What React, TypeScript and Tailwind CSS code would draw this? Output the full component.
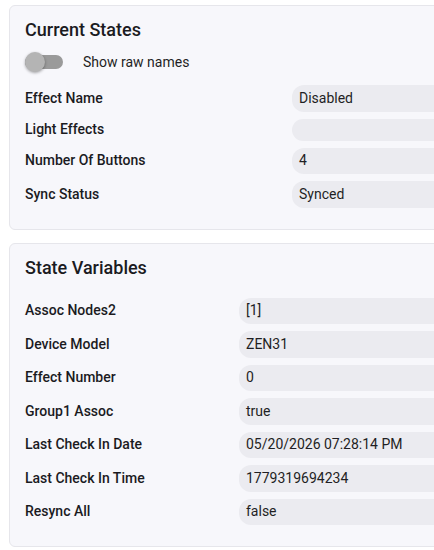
import React from "react";

type Row = { label: string; value: string };

const currentStates: Row[] = [
  { label: "Effect Name", value: "Disabled" },
  { label: "Light Effects", value: "" },
  { label: "Number Of Buttons", value: "4" },
  { label: "Sync Status", value: "Synced" },
];

const stateVariables: Row[] = [
  { label: "Assoc Nodes2", value: "[1]" },
  { label: "Device Model", value: "ZEN31" },
  { label: "Effect Number", value: "0" },
  { label: "Group1 Assoc", value: "true" },
  { label: "Last Check In Date", value: "05/20/2026 07:28:14 PM" },
  { label: "Last Check In Time", value: "1779319694234" },
  { label: "Resync All", value: "false" },
];

function ValuePill({ value }: { value: string }) {
  return (
    <div
      className={`flex flex-1 items-center rounded-xl bg-[#ebebf0] pl-[7px] text-[14px] text-[#1f1f24] ${
        value === "" ? "h-[22px]" : "h-[26.5px]"
      }`}
    >
      {value}
    </div>
  );
}

function StateRow({ row, labelWidth }: { row: Row; labelWidth: string }) {
  return (
    <div className="flex items-center">
      <div className={`${labelWidth} shrink-0 text-[14px] font-medium text-[#1b1b1f]`}>{row.label}</div>
      <ValuePill value={row.value} />
    </div>
  );
}

export default function App() {
  return (
    <div
      className="w-[434px] h-[550px] overflow-hidden bg-white pt-[5px] pl-[9px]"
      style={{ fontFamily: "Roboto, 'Noto Sans', Arial, sans-serif" }}
    >
      <div className="w-[520px]">
        {/* Current States */}
        <section className="rounded-md border border-[#e6e6eb] bg-[#f7f7fb] pl-[15px] pt-[12px] pb-[21px]">
          <h2 className="text-[18px] leading-[24px] font-medium text-[#1b1b1f]">Current States</h2>
          <div className="mt-[8px] flex h-[24px] items-center">
            <div className="relative h-[14px] w-[38px] rounded-full bg-[#9a9a9a]">
              <div className="absolute left-0 top-1/2 h-[20px] w-[20px] -translate-y-1/2 rounded-full bg-[#b4b4b4] shadow-[0_1px_3px_rgba(0,0,0,0.35)]" />
            </div>
            <span className="ml-[20px] text-[14px] text-[#1f1f24]">Show raw names</span>
          </div>
          <div className="mt-[11px] flex flex-col gap-[7px]">
            {currentStates.map((r) => (
              <StateRow key={r.label} row={r} labelWidth="w-[267px]" />
            ))}
          </div>
        </section>

        {/* State Variables */}
        <section className="mt-[13px] rounded-md border border-[#e6e6eb] bg-[#f7f7fb] pl-[15px] pt-[12px] pb-[21px]">
          <h2 className="text-[18px] leading-[24px] font-medium text-[#1b1b1f]">State Variables</h2>
          <div className="mt-[18px] flex flex-col gap-[7px]">
            {stateVariables.map((r) => (
              <StateRow key={r.label} row={r} labelWidth="w-[214px]" />
            ))}
          </div>
        </section>
      </div>
    </div>
  );
}
